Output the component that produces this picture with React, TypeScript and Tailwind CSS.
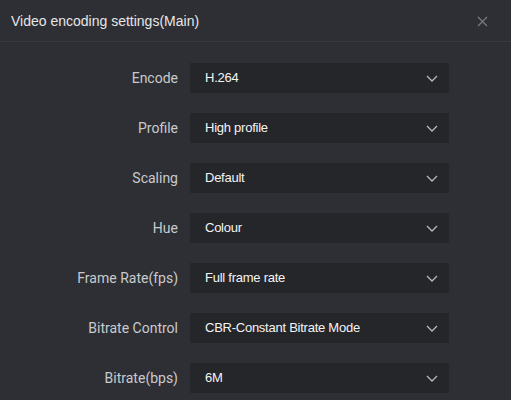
import React from 'react';

const rows: { label: string; value: string }[] = [
  { label: 'Encode', value: 'H.264' },
  { label: 'Profile', value: 'High profile' },
  { label: 'Scaling', value: 'Default' },
  { label: 'Hue', value: 'Colour' },
  { label: 'Frame Rate(fps)', value: 'Full frame rate' },
  { label: 'Bitrate Control', value: 'CBR-Constant Bitrate Mode' },
  { label: 'Bitrate(bps)', value: '6M' },
];

const Chevron = () => (
  <svg width="12" height="7" viewBox="0 0 12 7" fill="none" className="shrink-0">
    <path d="M1 1l5 5 5-5" stroke="#b9babe" strokeWidth="1.3" />
  </svg>
);

const App: React.FC = () => {
  return (
    <div className="w-[511px] h-[400px] bg-[#2e2f34] overflow-hidden font-['Roboto','Liberation_Sans',Arial,sans-serif]">
      <div className="h-[42px] flex items-center justify-between pl-[11px] pr-[23px] pt-[1px] border-b border-[#3a3b40]">
        <span className="font-['Liberation_Sans',Arial,sans-serif] text-[14px] text-[#e6e6e8]">
          Video encoding settings(Main)
        </span>
        <svg width="11" height="11" viewBox="0 0 11 11" fill="none">
          <path d="M1 1l9 9M10 1l-9 9" stroke="#7a7b80" strokeWidth="1.2" />
        </svg>
      </div>
      <div className="flex flex-col gap-[20px] pt-[21px]">
        {rows.map((r) => (
          <div key={r.label} className="flex items-center">
            <div className="w-[178px] text-right text-[14px] text-[#c9cacd]">{r.label}</div>
            <div className="ml-[12px] w-[259px] h-[30px] bg-[#25262a] flex items-center justify-between pl-[15px] pr-[11px]">
              <span className="font-['Liberation_Sans',Arial,sans-serif] text-[13px] tracking-[-0.25px] text-[#f4f4f5]">
                {r.value}
              </span>
              <Chevron />
            </div>
          </div>
        ))}
      </div>
    </div>
  );
};

export default App;
